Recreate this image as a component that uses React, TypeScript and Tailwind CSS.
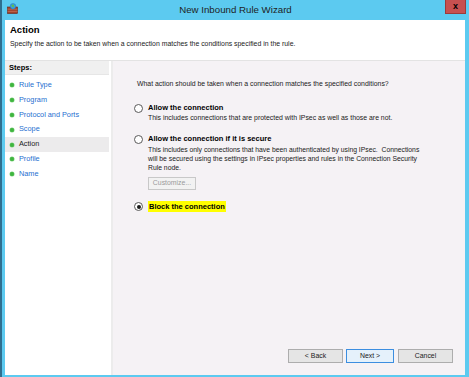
import React from 'react';

const steps = ['Rule Type', 'Program', 'Protocol and Ports', 'Scope', 'Action', 'Profile', 'Name'];

function Radio({ checked }: { checked?: boolean }) {
  return (
    <span className="w-[9px] h-[9px] rounded-full border border-[#5a5a5a] bg-white flex items-center justify-center shrink-0">
      {checked && <span className="w-[4px] h-[4px] rounded-full bg-[#1a1a1a]" />}
    </span>
  );
}

function WallIcon() {
  return (
    <svg width="11" height="11" viewBox="0 0 11 11">
      <rect x="0.5" y="4" width="10" height="6.5" fill="#a0432c" stroke="#6b2414" strokeWidth="0.6" />
      <line x1="0.5" y1="6.2" x2="10.5" y2="6.2" stroke="#d88a70" strokeWidth="0.5" />
      <line x1="0.5" y1="8.4" x2="10.5" y2="8.4" stroke="#d88a70" strokeWidth="0.5" />
      <circle cx="6" cy="3.3" r="2.8" fill="#3b9be0" stroke="#1c6fb0" strokeWidth="0.4" />
      <path d="M4.3 2.5 Q5.5 1 7 2 Q7.6 3.4 6.3 4.4 Q5 4 4.3 2.5Z" fill="#5fc24a" />
    </svg>
  );
}

export default function App() {
  return (
    <div
      className="w-[469px] h-[377px] bg-[#5ccaf0] flex flex-col border-l-2 border-[#2f6f8f] overflow-hidden"
      style={{ fontFamily: '"Liberation Sans", Arial, sans-serif' }}
    >
      {/* Title bar */}
      <div className="h-[20px] relative flex items-center justify-center shrink-0">
        <div className="absolute left-[5px] top-[3px]">
          <WallIcon />
        </div>
        <span className="text-[9.7px] text-[#1e1e1e] pt-[1px]">New Inbound Rule Wizard</span>
        <div className="absolute right-[3px] top-0 w-[21px] h-[14px] bg-[#c75050] border border-[#9c3a3a] border-t-0 flex items-center justify-center">
          <span className="text-[9px] font-bold text-black leading-none">x</span>
        </div>
      </div>

      <div className="flex-1 ml-[3px] mr-[4px] mb-[2px] flex flex-col bg-white">
        {/* Header */}
        <div className="h-[41px] border-b border-[#e3e3e3] pl-[5px] pt-[3px] shrink-0">
          <div className="text-[9.5px] font-bold text-black leading-[14px]">Action</div>
          <div className="text-[6.9px] text-[#1a1a1a] leading-[10px] mt-[2px]">
            Specify the action to be taken when a connection matches the conditions specified in the rule.
          </div>
        </div>

        <div className="flex-1 flex">
          {/* Sidebar */}
          <div className="w-[108px] bg-white border-r-2 border-[#ececec] shrink-0">
            <div className="h-[14px] bg-[#f0f0f0] border-b border-[#e6e6e6] mr-[2px] pl-[4px] text-[7.5px] font-bold text-black leading-[14px]">
              Steps:
            </div>
            <div className="pt-[3px] mr-[2px]">
              {steps.map((s) => (
                <div
                  key={s}
                  className={`h-[14.8px] flex items-center pl-[5px] gap-[5px] ${s === 'Action' ? 'bg-[#ecebec]' : ''}`}
                >
                  <span className="w-[4px] h-[4px] rounded-full bg-[#3fb53f] shadow-[0_0_0_0.5px_#7fd07f]" />
                  <span className={`text-[7.3px] ${s === 'Action' ? 'text-[#1a1a1a]' : 'text-[#1f6fd0]'}`}>{s}</span>
                </div>
              ))}
            </div>
          </div>

          {/* Main panel */}
          <div className="flex-1 bg-[#f5f2f5] flex flex-col pl-[21px] pt-[18px] pr-[12px] pb-[12px]">
            <div className="text-[6.9px] text-[#1a1a1a] leading-[10px] pl-[3px]">
              What action should be taken when a connection matches the specified conditions?
            </div>

            <div className="mt-[14px] flex items-center gap-[5px]">
              <Radio />
              <span className="text-[7.5px] font-bold text-black leading-[10px]">Allow the connection</span>
            </div>
            <div className="pl-[14px] text-[6.9px] text-[#1a1a1a] leading-[10px]">
              This includes connections that are protected with IPsec as well as those are not.
            </div>

            <div className="mt-[11px] flex items-center gap-[5px]">
              <Radio />
              <span className="text-[7.5px] font-bold text-black leading-[10px]">Allow the connection if it is secure</span>
            </div>
            <div className="pl-[14px] text-[6.8px] text-[#1a1a1a] leading-[9px] mt-[1px] whitespace-nowrap">
              <div>This includes only connections that have been authenticated by using IPsec.&nbsp; Connections</div>
              <div>will be secured using the settings in IPsec properties and rules in the Connection Security</div>
              <div>Rule node.</div>
            </div>
            <div className="pl-[14px] mt-[5px]">
              <div className="w-[48px] h-[13px] border border-[#c8c8c8] bg-[#f2f2f2] flex items-center justify-center text-[6.9px] text-[#9a9a9a]">
                Customize...
              </div>
            </div>

            <div className="mt-[11px] flex items-center gap-[5px]">
              <Radio checked />
              <span className="text-[7.5px] font-bold text-black leading-[11px] bg-[#ffff00] px-[1px]">
                Block the connection
              </span>
            </div>

            <div className="flex-1" />

            {/* Buttons */}
            <div className="flex justify-end gap-[3px]">
              <div className="w-[55px] h-[14px] border border-[#adadad] bg-[#e5e5e5] flex items-center justify-center text-[6.9px] text-[#1a1a1a]">
                &lt; Back
              </div>
              <div className="w-[48px] h-[14px] border border-[#3c8ee0] bg-[#e5f1fb] flex items-center justify-center text-[6.9px] text-[#1a1a1a]">
                Next &gt;
              </div>
              <div className="w-[55px] h-[14px] border border-[#adadad] bg-[#e5e5e5] flex items-center justify-center text-[6.9px] text-[#1a1a1a] ml-[1px]">
                Cancel
              </div>
            </div>
          </div>
        </div>
      </div>
    </div>
  );
}
